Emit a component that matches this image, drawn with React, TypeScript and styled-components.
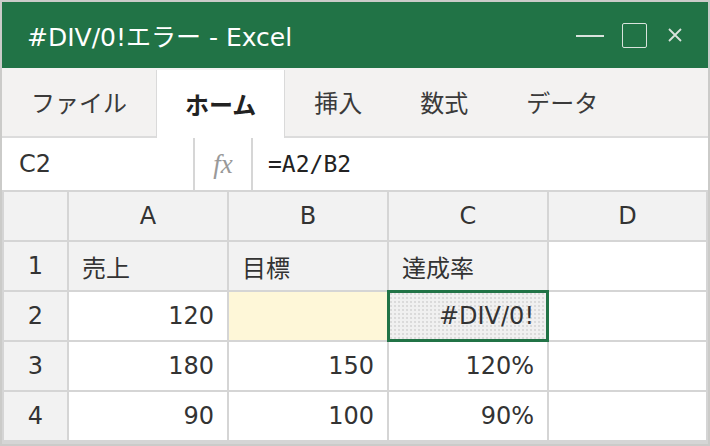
import styled, { createGlobalStyle } from 'styled-components'

const GlobalStyle = createGlobalStyle`
  html, body {
    margin: 0;
    padding: 0;
    background: #cbcbc9;
  }
  body {
    font-family: 'DejaVu Sans', 'Noto Sans CJK JP', sans-serif;
    color: #333;
  }
`

const Window = styled.div`
  width: 706px;
  height: 442px;
  margin: 2px;
  background: #fff;
  display: flex;
  flex-direction: column;
  overflow: hidden;
`

const TitleBar = styled.div`
  height: 66px;
  flex: none;
  background: #217346;
  color: #fff;
  display: flex;
  align-items: center;
  padding: 0 26px 0 25px;
`

const Title = styled.div`
  flex: 1;
  font-family: 'DejaVu Sans', 'Noto Sans CJK JP', sans-serif;
  font-size: 25px;
`

const Controls = styled.div`
  display: flex;
  align-items: center;
  gap: 18px;
`

const Minimize = styled.div`
  width: 28px;
  height: 2px;
  background: #d9e3dd;
  margin-top: 2px;
`

const Maximize = styled.div`
  width: 23px;
  height: 23px;
  border: 1px solid #d9e3dd;
  border-radius: 2px;
`

const Close = styled.div`
  width: 14px;
  height: 14px;
  margin-left: 3px;
  svg {
    display: block;
  }
`

const TabBar = styled.div`
  height: 68px;
  flex: none;
  background: #f3f2f1;
  border-bottom: 2px solid #dcdcdc;
  display: flex;
  align-items: stretch;
`

const Tab = styled.div<{ $active?: boolean }>`
  padding: 0 28px 2px;
  margin-top: ${(p) => (p.$active ? '2px' : '0')};
  display: flex;
  align-items: center;
  font-family: 'Noto Sans CJK JP', sans-serif;
  font-size: 24px;
  font-weight: ${(p) => (p.$active ? 700 : 400)};
  color: ${(p) => (p.$active ? '#222' : '#3a3a3a')};
  background: ${(p) => (p.$active ? '#fff' : 'transparent')};
  border-left: 1px solid ${(p) => (p.$active ? '#dadada' : 'transparent')};
  border-right: 1px solid ${(p) => (p.$active ? '#dadada' : 'transparent')};
  margin-bottom: ${(p) => (p.$active ? '-2px' : '0')};
`

const FormulaBar = styled.div`
  height: 52px;
  flex: none;
  display: flex;
  align-items: stretch;
`

const NameBox = styled.div`
  width: 193px;
  border-right: 2px solid #d6d6d6;
  display: flex;
  align-items: center;
  padding-left: 17px;
  box-sizing: border-box;
  font-size: 24px;
  color: #333;
`

const FxBox = styled.div`
  width: 58px;
  border-right: 2px solid #d6d6d6;
  display: flex;
  align-items: center;
  justify-content: center;
  font-family: 'Liberation Serif', serif;
  font-style: italic;
  font-size: 27px;
  color: #999;
  box-sizing: border-box;
`

const Formula = styled.div`
  display: flex;
  align-items: center;
  padding-left: 15px;
  font-family: 'DejaVu Sans Mono', monospace;
  font-size: 23px;
  color: #222;
`

const Grid = styled.div`
  flex: 1;
  display: grid;
  grid-template-columns: 63px repeat(3, 158px) 1fr;
  grid-auto-rows: 48px;
  gap: 2px;
  padding: 2px;
  background: #d5d5d5;
`

type CellKind = 'head' | 'plain' | 'input' | 'error'

const Cell = styled.div<{ $kind?: CellKind; $align?: 'left' | 'right' | 'center' }>`
  display: flex;
  align-items: center;
  justify-content: ${(p) =>
    p.$align === 'right' ? 'flex-end' : p.$align === 'center' ? 'center' : 'flex-start'};
  padding: 0 13px;
  font-family: 'Noto Sans CJK JP', sans-serif;
  font-size: 24px;
  color: #333;
  background: ${(p) =>
    p.$kind === 'head' ? '#f2f2f2' : p.$kind === 'input' ? '#fef7d8' : '#fff'};
  ${(p) =>
    p.$kind === 'error' &&
    `
    background-color: #f0f0f0;
    background-image: radial-gradient(#dadada 0.7px, transparent 0.9px);
    background-size: 4px 4px;
    outline: 3px solid #217346;
    outline-offset: -1px;
    position: relative;
    z-index: 1;
  `}
`

const Num = styled.span`
  font-family: 'DejaVu Sans', sans-serif;
  font-size: 24px;
`

const CloseIcon = () => (
  <svg width="14" height="14" viewBox="0 0 14 14">
    <path d="M1 1L13 13M13 1L1 13" stroke="#d9e3dd" strokeWidth="1.8" />
  </svg>
)

const tabs = ['ファイル', 'ホーム', '挿入', '数式', 'データ']

export default function App() {
  return (
    <>
      <GlobalStyle />
      <Window>
        <TitleBar>
          <Title>#DIV/0!エラー - Excel</Title>
          <Controls>
            <Minimize />
            <Maximize />
            <Close>
              <CloseIcon />
            </Close>
          </Controls>
        </TitleBar>
        <TabBar>
          {tabs.map((t) => (
            <Tab key={t} $active={t === 'ホーム'}>
              {t}
            </Tab>
          ))}
        </TabBar>
        <FormulaBar>
          <NameBox>C2</NameBox>
          <FxBox>fx</FxBox>
          <Formula>=A2/B2</Formula>
        </FormulaBar>
        <Grid>
          <Cell $kind="head" />
          {['A', 'B', 'C', 'D'].map((c) => (
            <Cell key={c} $kind="head" $align="center">
              <Num>{c}</Num>
            </Cell>
          ))}

          <Cell $kind="head" $align="center"><Num>1</Num></Cell>
          <Cell $kind="head">売上</Cell>
          <Cell $kind="head">目標</Cell>
          <Cell $kind="head">達成率</Cell>
          <Cell />

          <Cell $kind="head" $align="center"><Num>2</Num></Cell>
          <Cell $align="right"><Num>120</Num></Cell>
          <Cell $kind="input" />
          <Cell $kind="error" $align="right"><Num>#DIV/0!</Num></Cell>
          <Cell />

          <Cell $kind="head" $align="center"><Num>3</Num></Cell>
          <Cell $align="right"><Num>180</Num></Cell>
          <Cell $align="right"><Num>150</Num></Cell>
          <Cell $align="right"><Num>120%</Num></Cell>
          <Cell />

          <Cell $kind="head" $align="center"><Num>4</Num></Cell>
          <Cell $align="right"><Num>90</Num></Cell>
          <Cell $align="right"><Num>100</Num></Cell>
          <Cell $align="right"><Num>90%</Num></Cell>
          <Cell />
        </Grid>
      </Window>
    </>
  )
}
